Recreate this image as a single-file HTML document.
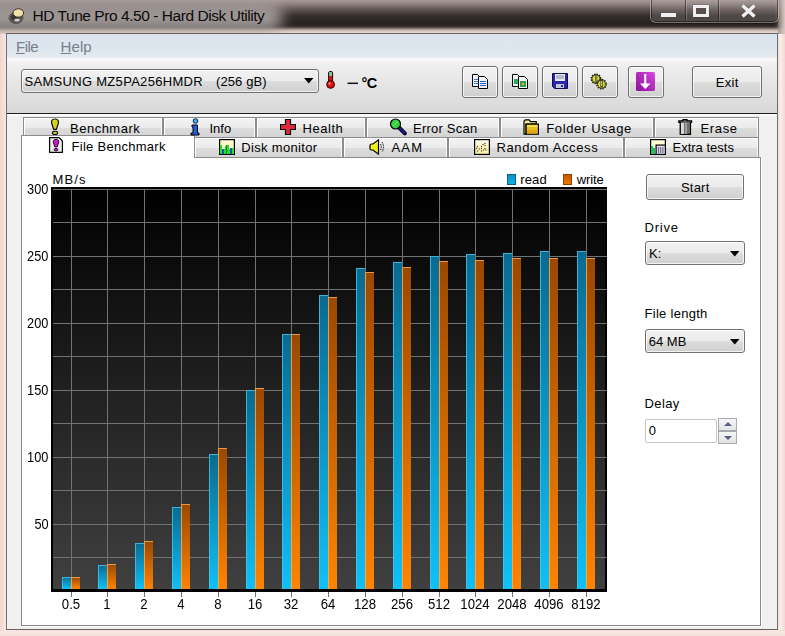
<!DOCTYPE html>
<html><head><meta charset="utf-8"><title>HD Tune Pro</title><style>
*{margin:0;padding:0;box-sizing:border-box}
html,body{width:785px;height:636px;overflow:hidden;background:linear-gradient(90deg,#f2d8d2,#f8e4e0 6px,#f6e0da 50%,#f3dcd6);font-family:"Liberation Sans",sans-serif}
.a{position:absolute}
.t{position:absolute;white-space:pre}
.btn{position:absolute;border:1px solid #707070;border-radius:3px;
 background:linear-gradient(#f2f2f2 0%,#ebebeb 50%,#dddddd 51%,#cfcfcf 100%);
 box-shadow:inset 0 0 0 1px rgba(255,255,255,.75)}
.combo{position:absolute;border:1px solid #707070;border-radius:3px;
 background:linear-gradient(#f2f2f2 0%,#ebebeb 50%,#dddddd 51%,#cfcfcf 100%);
 box-shadow:inset 0 0 0 1px rgba(255,255,255,.75)}
.tab{position:absolute;border:1px solid #8c8c8c;border-bottom:none;box-shadow:inset 1px 1px 0 #fff,inset -1px 0 0 #fafafa;
 background:linear-gradient(#f3f3f3 0%,#ebebeb 50%,#dddddd 51%,#d4d4d4 100%)}
</style></head><body>
<div class="a" style="left:0;top:0;width:785px;height:34px;background:linear-gradient(#a89a98 0px,#8e8280 4px,#5e5250 10px,#342c2b 16px,#282221 23px,#2e2624 26px,#6a5c58 28px,#c4b2aa 30px,#e4d2ca 32px,#eedad2 34px)"></div>
<div class="a" style="left:-40px;top:3px;width:323px;height:28px;border-radius:14px;background:linear-gradient(#b8aeac,#9c9696 40%,#908c8c 65%,#c0b2ac);filter:blur(7px);opacity:1"></div>
<svg class="a" style="left:6px;top:6px" width="22" height="20" viewBox="0 0 22 20">
<ellipse cx="10" cy="12" rx="7.5" ry="6" fill="#2a2424" opacity=".55"/>
<ellipse cx="9" cy="11.5" rx="4" ry="3" fill="#1a1414" opacity=".5"/>
<ellipse cx="12.3" cy="7" rx="5.3" ry="4.2" fill="#f0e0a8" stroke="#2a2018" stroke-width=".9"/>
<ellipse cx="11" cy="14" rx="2.8" ry="1.6" fill="#e8e8e8" opacity=".85"/>
</svg>
<div class="t" style="left:32.5px;top:8.48px;font-size:15.5px;line-height:15.5px;color:#0c0a0a;letter-spacing:-0.45px">HD Tune Pro 4.50 - Hard Disk Utility</div>
<div class="a" style="left:778px;top:0;width:7px;height:34px;background:linear-gradient(90deg,rgba(120,105,100,.6),rgba(200,185,180,.9) 60%,#d8c8c4);"></div>
<div class="a" style="left:775px;top:0;width:6px;height:34px;background:linear-gradient(90deg,rgba(0,0,0,0),rgba(200,185,180,.5));filter:blur(1px)"></div>
<div class="a" style="left:650px;top:-3px;width:129px;height:26px;border:1px solid rgba(255,255,255,.32);border-radius:0 0 6px 6px;box-shadow:inset 0 0 0 1px rgba(20,12,12,.55),0 1px 1px rgba(0,0,0,.3);background:linear-gradient(rgba(255,255,255,.04),rgba(255,255,255,.16))"></div>
<div class="a" style="left:685px;top:0;width:1px;height:21px;background:rgba(30,20,20,.55);box-shadow:1px 0 0 rgba(255,255,255,.2)"></div>
<div class="a" style="left:718px;top:0;width:1px;height:21px;background:rgba(30,20,20,.55);box-shadow:1px 0 0 rgba(255,255,255,.2)"></div>
<div class="a" style="left:661px;top:13px;width:15px;height:4px;background:#f0f0f0;box-shadow:0 0 1px #333"></div>
<div class="a" style="left:693px;top:5px;width:16px;height:12px;border:3px solid #f0f0f0;border-top-width:3px;background:#5a5050;box-shadow:0 0 1px #333"></div>
<svg class="a" style="left:740px;top:4px" width="17" height="14" viewBox="0 0 17 14">
<path d="M2.5 1.5 L14.5 12.5 M14.5 1.5 L2.5 12.5" stroke="#3a3030" stroke-width="4.4" opacity=".35"/><path d="M2.5 1.5 L14.5 12.5 M14.5 1.5 L2.5 12.5" stroke="#f0f0f0" stroke-width="3.4"/></svg>
<div class="a" style="left:0;top:34px;width:6px;height:602px;background:linear-gradient(90deg,#f2d6d0,#fae6e2)"></div>
<div class="a" style="left:778px;top:34px;width:7px;height:602px;background:linear-gradient(90deg,#f0dcd8,#fbefec 35%,#f6e2dd 70%,#f2dad4)"></div>
<div class="a" style="left:0;top:630px;width:785px;height:6px;background:linear-gradient(#f4e0dc,#f8e8e4 40%,#f3dcd6)"></div>
<div class="a" style="left:6px;top:33px;width:772px;height:597px;border:1px solid #6a6262;border-left-color:#707070;border-right-color:#707070;background:#f0f0f0"></div>
<div class="a" style="left:7px;top:34px;width:770px;height:24px;background:linear-gradient(#dbe3ec,#dee6ee 70%,#e6ebf0)"></div>
<div class="t" style="left:16px;top:39.30px;font-size:15px;line-height:15px;color:#76808c;letter-spacing:-0.5px"><u>F</u>ile</div>
<div class="t" style="left:60.5px;top:39.30px;font-size:15px;line-height:15px;color:#76808c;letter-spacing:0.1px"><u>H</u>elp</div>
<div class="a" style="left:7px;top:58px;width:770px;height:55px;background:linear-gradient(#f8f8f8,#eeeeee 15%,#e6e6e6 45%,#d8d8d8)"></div>
<div class="a" style="left:7px;top:113px;width:770px;height:1px;background:#1e1e1e"></div>
<div class="a" style="left:7px;top:114px;width:770px;height:2px;background:#fafafa"></div>
<div class="combo" style="left:21px;top:69px;width:298px;height:24px"></div>
<div class="t" style="left:24.5px;top:74.99px;font-size:13px;line-height:13px;color:#000;letter-spacing:0.3px">SAMSUNG MZ5PA256HMDR</div>
<div class="t" style="left:216px;top:74.99px;font-size:13px;line-height:13px;color:#000;letter-spacing:0.1px">(256 gB)</div>
<svg class="a" style="left:304px;top:78px" width="10" height="6"><path d="M0 0H9.5L4.75 5.5Z" fill="#000"/></svg>
<svg class="a" style="left:325px;top:70px" width="11" height="19" viewBox="0 0 11 19">
<rect x="3.6" y="1.5" width="4" height="12" rx="1.5" fill="#c81818" stroke="#300" stroke-width="1"/>
<rect x="4.2" y="2" width="2.8" height="4" fill="#70d0a8"/>
<circle cx="5.6" cy="14.4" r="3.9" fill="#e01010" stroke="#300" stroke-width="1"/>
<circle cx="4.6" cy="13.6" r="1.1" fill="#ffb0b0"/>
</svg>
<svg class="a" style="left:346px;top:80px" width="13" height="6"><path d="M1.5 3.3H12" stroke="#111" stroke-width="1.5"/></svg>
<div class="t" style="left:361.5px;top:75.52px;font-size:14.5px;line-height:14.5px;color:#000;font-weight:bold;letter-spacing:-0.6px">°C</div>
<div class="btn" style="left:462px;top:66px;width:36px;height:32px"></div>
<div class="btn" style="left:502px;top:66px;width:36px;height:32px"></div>
<div class="btn" style="left:542px;top:66px;width:36px;height:32px"></div>
<div class="btn" style="left:582px;top:66px;width:36px;height:32px"></div>
<div class="btn" style="left:628px;top:66px;width:36px;height:32px"></div>
<div class="btn" style="left:692px;top:66px;width:70px;height:32px"></div>
<div class="t" style="left:715.8px;top:75.99px;font-size:13px;line-height:13px;color:#000;letter-spacing:0.3px">Exit</div>
<svg class="a" style="left:472px;top:74px" width="18" height="16" viewBox="0 0 18 16">
<path d="M0.5 0.5H5.5L7.5 2.5V12.5H0.5Z" fill="#eef4fb" stroke="#000"/>
<path d="M2 5.5H6M2 7.5H6M2 9.5H6" stroke="#2a7fd0" stroke-width="1"/>
<path d="M6.5 2.5H12.5L15.5 5.5V14.5H6.5Z" fill="#eef4fb" stroke="#000"/>
<path d="M8 7.5H14M8 9.5H14M8 11.5H14" stroke="#2a5fd0" stroke-width="1"/>
</svg>
<svg class="a" style="left:512px;top:74px" width="18" height="16" viewBox="0 0 18 16">
<path d="M0.5 0.5H5.5L7.5 2.5V12.5H0.5Z" fill="#f4f4f4" stroke="#000"/>
<rect x="2" y="5" width="4" height="5" fill="#20b060"/>
<path d="M6.5 2.5H12.5L15.5 5.5V14.5H6.5Z" fill="#f4f4f4" stroke="#000"/>
<rect x="8" y="7" width="6" height="6" fill="#30a050"/><rect x="10" y="9" width="2" height="2" fill="#d0c020"/>
</svg>
<svg class="a" style="left:552px;top:73px" width="16" height="16" viewBox="0 0 16 16">
<path d="M0.5 0.5H15.5V15.5H2.5L0.5 13.5Z" fill="#2828a8" stroke="#101050"/>
<rect x="3" y="1" width="10" height="7" fill="#e8e8f0"/>
<path d="M4 3H12M4 5H12" stroke="#8888a0" stroke-width="1"/>
<rect x="4" y="11" width="8" height="4" fill="#c8c8d0"/>
<rect x="9" y="12" width="2" height="2" fill="#2828a8"/>
</svg>
<svg class="a" style="left:590px;top:73px" width="18" height="17" viewBox="0 0 18 17">
<circle cx="6" cy="5.8" r="4.6" fill="none" stroke="#1a1a00" stroke-width="1.6" stroke-dasharray="1.4 1.0"/>
<circle cx="6" cy="5.8" r="4" fill="#d6e028" stroke="#1a1a00" stroke-width=".7"/>
<circle cx="11.5" cy="11.2" r="4.6" fill="none" stroke="#1a1a00" stroke-width="1.6" stroke-dasharray="1.4 1.0"/>
<circle cx="11.5" cy="11.2" r="4" fill="#d6e028" stroke="#1a1a00" stroke-width=".7"/>
<rect x="5.3" y="1.5" width="1.6" height="7" fill="#c8c0c8" stroke="#302838" stroke-width=".6"/>
<rect x="10.8" y="7" width="1.6" height="7" fill="#c8c0c8" stroke="#302838" stroke-width=".6"/>
</svg>
<svg class="a" style="left:636px;top:72px" width="19" height="19" viewBox="0 0 19 19">
<defs><linearGradient id="pg" x1="0" y1="1" x2="1" y2="0"><stop offset="0" stop-color="#8a1098"/><stop offset="1" stop-color="#d848e0"/></linearGradient></defs>
<rect x="0" y="0" width="19" height="19" rx="1.5" fill="url(#pg)"/>
<path d="M8.2 2H10.3V11.5H14.5L9.25 17L4 11.5H8.2Z" fill="#fff"/>
</svg>
<div class="a" style="left:21px;top:157px;width:741px;height:470px;border-right:1px solid #fff;border-bottom:1px solid #fff"></div>
<div class="a" style="left:21px;top:157px;width:740px;height:469px;border:1px solid #8a8a8a;background:#fff"></div>
<div class="tab" style="left:23px;top:117px;width:140px;height:20px"></div>
<div class="t" style="left:70px;top:121.79px;font-size:13px;line-height:13px;color:#000;letter-spacing:0.5px">Benchmark</div>
<div class="tab" style="left:163px;top:117px;width:93px;height:20px"></div>
<div class="t" style="left:209.5px;top:121.79px;font-size:13px;line-height:13px;color:#000;letter-spacing:0px">Info</div>
<div class="tab" style="left:256px;top:117px;width:110px;height:20px"></div>
<div class="t" style="left:302.5px;top:121.79px;font-size:13px;line-height:13px;color:#000;letter-spacing:0.55px">Health</div>
<div class="tab" style="left:366px;top:117px;width:134px;height:20px"></div>
<div class="t" style="left:413px;top:121.79px;font-size:13px;line-height:13px;color:#000;letter-spacing:0.22px">Error Scan</div>
<div class="tab" style="left:500px;top:117px;width:154px;height:20px"></div>
<div class="t" style="left:546.3px;top:121.79px;font-size:13px;line-height:13px;color:#000;letter-spacing:0.63px">Folder Usage</div>
<div class="tab" style="left:654px;top:117px;width:105px;height:20px"></div>
<div class="t" style="left:700.5px;top:121.79px;font-size:13px;line-height:13px;color:#000;letter-spacing:0.65px">Erase</div>
<div class="a" style="left:21px;top:135px;width:174px;height:23px;border:1px solid #8c8c8c;border-bottom:none;background:#fff"></div>
<div class="tab" style="left:194px;top:137px;width:149px;height:20px"></div>
<div class="t" style="left:241.3px;top:141.49px;font-size:13px;line-height:13px;color:#000;letter-spacing:0.32px">Disk monitor</div>
<div class="tab" style="left:343px;top:137px;width:105px;height:20px"></div>
<div class="t" style="left:391.5px;top:141.49px;font-size:13px;line-height:13px;color:#000;letter-spacing:1.2px">AAM</div>
<div class="tab" style="left:448px;top:137px;width:176px;height:20px"></div>
<div class="t" style="left:496.5px;top:141.49px;font-size:13px;line-height:13px;color:#000;letter-spacing:0.6px">Random Access</div>
<div class="tab" style="left:624px;top:137px;width:135px;height:20px"></div>
<div class="t" style="left:672.5px;top:141.49px;font-size:13px;line-height:13px;color:#000;letter-spacing:0.0px">Extra tests</div>
<div class="t" style="left:71.5px;top:139.79px;font-size:13px;line-height:13px;color:#000;letter-spacing:0.28px">File Benchmark</div>
<svg class="a" style="left:50px;top:118px" width="10" height="18" viewBox="0 0 10 18">
<path d="M5 1C8.3 1 8.9 3.6 8.2 5.8L6.3 11.4H3.7L1.8 5.8C1.1 3.6 1.7 1 5 1Z" fill="#d4d41c" stroke="#000" stroke-width="1.1"/>
<path d="M3.5 3Q4 2 5 2" stroke="#f0f080" stroke-width="1" fill="none"/>
<ellipse cx="5" cy="14.9" rx="2.6" ry="1.6" fill="#d4d41c" stroke="#000" stroke-width="1.1"/>
</svg>
<svg class="a" style="left:189px;top:118px" width="12" height="18" viewBox="0 0 12 18">
<circle cx="6.5" cy="3" r="2.3" fill="#40b0e8" stroke="#102050" stroke-width="1"/>
<path d="M3 7H8.5V15H10V17H2V15H4V9H3Z" fill="#2060e0" stroke="#000" stroke-width="1"/>
</svg>
<svg class="a" style="left:280px;top:119px" width="16" height="16" viewBox="0 0 16 16">
<path d="M5.5 0.5H10.5V5.5H15.5V10.5H10.5V15.5H5.5V10.5H0.5V5.5H5.5Z" fill="#e02838" stroke="#000" stroke-width="1.2"/>
</svg>
<svg class="a" style="left:389px;top:118px" width="18" height="18" viewBox="0 0 18 18">
<path d="M10 9.5L15.8 15.3" stroke="#000" stroke-width="4" stroke-linecap="round"/>
<path d="M10.5 10L15.6 15.1" stroke="#1a1a98" stroke-width="2.2" stroke-linecap="round"/>
<circle cx="6.5" cy="6" r="5" fill="#38d040" stroke="#000" stroke-width="1.2"/>
<path d="M4 8L8.5 3.5" stroke="#90f090" stroke-width="1" opacity=".7"/>
</svg>
<svg class="a" style="left:523px;top:119px" width="17" height="16" viewBox="0 0 17 16">
<path d="M1 15.2V2.3L2.4 0.8H6.1L7.6 2.6H13.2V5.2H3V15.2Z" fill="#f4ec9c" stroke="#000" stroke-width="1.2"/>
<rect x="3.1" y="5.1" width="12.3" height="10.1" fill="#e6c020" stroke="#000" stroke-width="1.2"/>
<rect x="4" y="6" width="10.5" height="2" fill="#f2dc50"/>
<rect x="4" y="11" width="10.5" height="3.5" fill="#e0a818"/>
</svg>
<svg class="a" style="left:678px;top:119px" width="15" height="16" viewBox="0 0 15 16">
<path d="M0.8 1.8H5V0.7H9V1.8H13.6V3.5H12.5V15.3H2.2V3.5H0.8Z" fill="#707070" stroke="#000" stroke-width="1.2"/>
<rect x="3" y="4" width="3" height="11" fill="#d8d8d8"/><rect x="7" y="4" width="2" height="11" fill="#a0a0a0"/>
</svg>
<svg class="a" style="left:49px;top:137px" width="14" height="16" viewBox="0 0 14 16">
<path d="M0.6 0.6H10L13.4 4V15.4H0.6Z" fill="#e8f0e8" stroke="#000" stroke-width="1.2"/>
<path d="M7 2.3C9.6 2.3 10 4.4 9.5 6L8.1 10H5.9L4.5 6C4 4.4 4.4 2.3 7 2.3Z" fill="#c020c0" stroke="#300030" stroke-width="1"/>
<ellipse cx="7" cy="12.6" rx="1.9" ry="1.2" fill="#c020c0" stroke="#300030" stroke-width="1"/>
</svg>
<svg class="a" style="left:219px;top:139px" width="16" height="16" viewBox="0 0 16 16">
<rect x="0.6" y="0.6" width="14.8" height="14.8" fill="#fff8c8" stroke="#000" stroke-width="1.2"/>
<path d="M1 6H3V10H6V7H8V6H10V10H12V9H15V15H1Z" fill="#20e020"/>
<rect x="3" y="10" width="2" height="5" fill="#2050c0"/><rect x="7" y="6" width="1" height="9" fill="#108040"/><rect x="11" y="9" width="2" height="6" fill="#2050c0"/>
</svg>
<svg class="a" style="left:369px;top:139px" width="17" height="16" viewBox="0 0 17 16">
<path d="M1 6.5Q1 5 2.5 5H4L9.5 0.8V15.2L4 11H2.5Q1 11 1 9.5Z" fill="#f0f020" stroke="#000" stroke-width="1.2"/>
<path d="M11.5 5Q13 8 11.5 11M13 3Q16 8 13 13" fill="none" stroke="#000" stroke-width="1" stroke-dasharray="1.5 1"/>
</svg>
<svg class="a" style="left:474px;top:139px" width="16" height="16" viewBox="0 0 16 16">
<defs><linearGradient id="rag" x1="0" y1="0" x2="0" y2="1"><stop offset="0" stop-color="#fffef0"/><stop offset="1" stop-color="#f8f0a0"/></linearGradient></defs>
<rect x="0.6" y="0.6" width="14.8" height="14.8" fill="url(#rag)" stroke="#000" stroke-width="1.2"/>
<g fill="#604010"><circle cx="11" cy="4.5" r=".7"/><circle cx="9" cy="5.5" r=".7"/><circle cx="11" cy="6.5" r=".7"/><circle cx="3.5" cy="7.5" r=".7"/><circle cx="7.5" cy="7.5" r=".7"/><circle cx="2.7" cy="9.3" r=".7"/><circle cx="5.3" cy="10" r=".7"/><circle cx="7.5" cy="9.5" r=".7"/><circle cx="11" cy="9.5" r=".7"/><circle cx="3.5" cy="12" r=".7"/><circle cx="7.5" cy="12" r=".7"/><circle cx="9.5" cy="11" r=".7"/><circle cx="12" cy="11" r=".7"/></g>
</svg>
<svg class="a" style="left:650px;top:139px" width="16" height="16" viewBox="0 0 16 16">
<rect x="0.6" y="0.6" width="14.8" height="14.8" fill="#fffcd0" stroke="#000" stroke-width="1.2"/>
<path d="M1 7H3V9H5V15H1Z" fill="#20c060"/>
<rect x="6.1" y="6.1" width="9.3" height="9.3" fill="#f0e0f8" stroke="#000" stroke-width="1.2"/>
<g fill="#403060"><circle cx="8.5" cy="9" r=".8"/><circle cx="10.7" cy="9" r=".8"/><circle cx="12.9" cy="9" r=".8"/><circle cx="8.5" cy="11" r=".8"/><circle cx="10.7" cy="11" r=".8"/><circle cx="12.9" cy="11" r=".8"/><circle cx="8.5" cy="13" r=".8"/><circle cx="10.7" cy="13" r=".8"/><circle cx="12.9" cy="13" r=".8"/></g>
</svg>
<svg class="a" style="left:0;top:0" width="785" height="636" viewBox="0 0 785 636">
<defs>
<linearGradient id="cbg" x1="0" y1="0" x2="0" y2="1"><stop offset="0" stop-color="#000"/><stop offset="1" stop-color="#404040"/></linearGradient>
<linearGradient id="bb" x1="0" y1="0" x2="0" y2="1"><stop offset="0" stop-color="#0a6a90"/><stop offset="1" stop-color="#10c0f8"/></linearGradient>
<linearGradient id="ob" x1="0" y1="0" x2="0" y2="1"><stop offset="0" stop-color="#9a4800"/><stop offset="1" stop-color="#ff8400"/></linearGradient>
</defs>
<rect x="51" y="187" width="556" height="405" fill="#000"/>
<rect x="53" y="189" width="552" height="400" fill="url(#cbg)"/>
<path d="M53 189.5H607" stroke="#727272" stroke-width="1"/>
<path d="M53 222.5H607" stroke="#727272" stroke-width="1"/>
<path d="M53 256.5H607" stroke="#727272" stroke-width="1"/>
<path d="M53 289.5H607" stroke="#727272" stroke-width="1"/>
<path d="M53 323.5H607" stroke="#727272" stroke-width="1"/>
<path d="M53 356.5H607" stroke="#727272" stroke-width="1"/>
<path d="M53 390.5H607" stroke="#727272" stroke-width="1"/>
<path d="M53 423.5H607" stroke="#727272" stroke-width="1"/>
<path d="M53 457.5H607" stroke="#727272" stroke-width="1"/>
<path d="M53 490.5H607" stroke="#727272" stroke-width="1"/>
<path d="M53 524.5H607" stroke="#727272" stroke-width="1"/>
<path d="M53 557.5H607" stroke="#727272" stroke-width="1"/>
<path d="M71.5 189V597" stroke="#727272" stroke-width="1"/>
<path d="M107.5 189V597" stroke="#727272" stroke-width="1"/>
<path d="M144.5 189V597" stroke="#727272" stroke-width="1"/>
<path d="M181.5 189V597" stroke="#727272" stroke-width="1"/>
<path d="M218.5 189V597" stroke="#727272" stroke-width="1"/>
<path d="M255.5 189V597" stroke="#727272" stroke-width="1"/>
<path d="M291.5 189V597" stroke="#727272" stroke-width="1"/>
<path d="M328.5 189V597" stroke="#727272" stroke-width="1"/>
<path d="M365.5 189V597" stroke="#727272" stroke-width="1"/>
<path d="M402.5 189V597" stroke="#727272" stroke-width="1"/>
<path d="M439.5 189V597" stroke="#727272" stroke-width="1"/>
<path d="M475.5 189V597" stroke="#727272" stroke-width="1"/>
<path d="M512.5 189V597" stroke="#727272" stroke-width="1"/>
<path d="M549.5 189V597" stroke="#727272" stroke-width="1"/>
<path d="M586.5 189V597" stroke="#727272" stroke-width="1"/>
<rect x="62" y="577" width="9" height="12" fill="url(#bb)"/>
<path d="M62 577.5H71M62.5 577V589" stroke="#40c8f0" stroke-width="1" opacity=".8"/>
<rect x="71" y="577" width="9" height="12" fill="url(#ob)"/>
<path d="M71 577.5H80M71.5 577V589" stroke="#ffb050" stroke-width="1" opacity=".8"/>
<rect x="98" y="565" width="9" height="24" fill="url(#bb)"/>
<path d="M98 565.5H107M98.5 565V589" stroke="#40c8f0" stroke-width="1" opacity=".8"/>
<rect x="107" y="564" width="9" height="25" fill="url(#ob)"/>
<path d="M107 564.5H116M107.5 564V589" stroke="#ffb050" stroke-width="1" opacity=".8"/>
<rect x="135" y="543" width="9" height="46" fill="url(#bb)"/>
<path d="M135 543.5H144M135.5 543V589" stroke="#40c8f0" stroke-width="1" opacity=".8"/>
<rect x="144" y="541" width="9" height="48" fill="url(#ob)"/>
<path d="M144 541.5H153M144.5 541V589" stroke="#ffb050" stroke-width="1" opacity=".8"/>
<rect x="172" y="507" width="9" height="82" fill="url(#bb)"/>
<path d="M172 507.5H181M172.5 507V589" stroke="#40c8f0" stroke-width="1" opacity=".8"/>
<rect x="181" y="504" width="9" height="85" fill="url(#ob)"/>
<path d="M181 504.5H190M181.5 504V589" stroke="#ffb050" stroke-width="1" opacity=".8"/>
<rect x="209" y="454" width="9" height="135" fill="url(#bb)"/>
<path d="M209 454.5H218M209.5 454V589" stroke="#40c8f0" stroke-width="1" opacity=".8"/>
<rect x="218" y="448" width="9" height="141" fill="url(#ob)"/>
<path d="M218 448.5H227M218.5 448V589" stroke="#ffb050" stroke-width="1" opacity=".8"/>
<rect x="246" y="390" width="9" height="199" fill="url(#bb)"/>
<path d="M246 390.5H255M246.5 390V589" stroke="#40c8f0" stroke-width="1" opacity=".8"/>
<rect x="255" y="388" width="9" height="201" fill="url(#ob)"/>
<path d="M255 388.5H264M255.5 388V589" stroke="#ffb050" stroke-width="1" opacity=".8"/>
<rect x="282" y="334" width="9" height="255" fill="url(#bb)"/>
<path d="M282 334.5H291M282.5 334V589" stroke="#40c8f0" stroke-width="1" opacity=".8"/>
<rect x="291" y="334" width="9" height="255" fill="url(#ob)"/>
<path d="M291 334.5H300M291.5 334V589" stroke="#ffb050" stroke-width="1" opacity=".8"/>
<rect x="319" y="295" width="9" height="294" fill="url(#bb)"/>
<path d="M319 295.5H328M319.5 295V589" stroke="#40c8f0" stroke-width="1" opacity=".8"/>
<rect x="328" y="297" width="9" height="292" fill="url(#ob)"/>
<path d="M328 297.5H337M328.5 297V589" stroke="#ffb050" stroke-width="1" opacity=".8"/>
<rect x="356" y="268" width="9" height="321" fill="url(#bb)"/>
<path d="M356 268.5H365M356.5 268V589" stroke="#40c8f0" stroke-width="1" opacity=".8"/>
<rect x="365" y="272" width="9" height="317" fill="url(#ob)"/>
<path d="M365 272.5H374M365.5 272V589" stroke="#ffb050" stroke-width="1" opacity=".8"/>
<rect x="393" y="262" width="9" height="327" fill="url(#bb)"/>
<path d="M393 262.5H402M393.5 262V589" stroke="#40c8f0" stroke-width="1" opacity=".8"/>
<rect x="402" y="267" width="9" height="322" fill="url(#ob)"/>
<path d="M402 267.5H411M402.5 267V589" stroke="#ffb050" stroke-width="1" opacity=".8"/>
<rect x="430" y="256" width="9" height="333" fill="url(#bb)"/>
<path d="M430 256.5H439M430.5 256V589" stroke="#40c8f0" stroke-width="1" opacity=".8"/>
<rect x="439" y="261" width="9" height="328" fill="url(#ob)"/>
<path d="M439 261.5H448M439.5 261V589" stroke="#ffb050" stroke-width="1" opacity=".8"/>
<rect x="466" y="254" width="9" height="335" fill="url(#bb)"/>
<path d="M466 254.5H475M466.5 254V589" stroke="#40c8f0" stroke-width="1" opacity=".8"/>
<rect x="475" y="260" width="9" height="329" fill="url(#ob)"/>
<path d="M475 260.5H484M475.5 260V589" stroke="#ffb050" stroke-width="1" opacity=".8"/>
<rect x="503" y="253" width="9" height="336" fill="url(#bb)"/>
<path d="M503 253.5H512M503.5 253V589" stroke="#40c8f0" stroke-width="1" opacity=".8"/>
<rect x="512" y="258" width="9" height="331" fill="url(#ob)"/>
<path d="M512 258.5H521M512.5 258V589" stroke="#ffb050" stroke-width="1" opacity=".8"/>
<rect x="540" y="251" width="9" height="338" fill="url(#bb)"/>
<path d="M540 251.5H549M540.5 251V589" stroke="#40c8f0" stroke-width="1" opacity=".8"/>
<rect x="549" y="258" width="9" height="331" fill="url(#ob)"/>
<path d="M549 258.5H558M549.5 258V589" stroke="#ffb050" stroke-width="1" opacity=".8"/>
<rect x="577" y="251" width="9" height="338" fill="url(#bb)"/>
<path d="M577 251.5H586M577.5 251V589" stroke="#40c8f0" stroke-width="1" opacity=".8"/>
<rect x="586" y="258" width="9" height="331" fill="url(#ob)"/>
<path d="M586 258.5H595M586.5 258V589" stroke="#ffb050" stroke-width="1" opacity=".8"/>
<rect x="51" y="589" width="556" height="3" fill="#000"/>
<path d="M71.5 592V597" stroke="#727272" stroke-width="1"/>
<path d="M107.5 592V597" stroke="#727272" stroke-width="1"/>
<path d="M144.5 592V597" stroke="#727272" stroke-width="1"/>
<path d="M181.5 592V597" stroke="#727272" stroke-width="1"/>
<path d="M218.5 592V597" stroke="#727272" stroke-width="1"/>
<path d="M255.5 592V597" stroke="#727272" stroke-width="1"/>
<path d="M291.5 592V597" stroke="#727272" stroke-width="1"/>
<path d="M328.5 592V597" stroke="#727272" stroke-width="1"/>
<path d="M365.5 592V597" stroke="#727272" stroke-width="1"/>
<path d="M402.5 592V597" stroke="#727272" stroke-width="1"/>
<path d="M439.5 592V597" stroke="#727272" stroke-width="1"/>
<path d="M475.5 592V597" stroke="#727272" stroke-width="1"/>
<path d="M512.5 592V597" stroke="#727272" stroke-width="1"/>
<path d="M549.5 592V597" stroke="#727272" stroke-width="1"/>
<path d="M586.5 592V597" stroke="#727272" stroke-width="1"/>
<defs><linearGradient id="lb" x1="0" y1="0" x2="0" y2="1"><stop offset="0" stop-color="#1090c0"/><stop offset="1" stop-color="#10b0e8"/></linearGradient><linearGradient id="lo" x1="0" y1="0" x2="0" y2="1"><stop offset="0" stop-color="#c05800"/><stop offset="1" stop-color="#f07800"/></linearGradient></defs>
<rect x="507.5" y="174.5" width="8" height="10" fill="url(#lb)" stroke="#0a6088" stroke-width="1"/>
<rect x="563.5" y="174.5" width="8" height="10" fill="url(#lo)" stroke="#904000" stroke-width="1"/>
</svg>
<div class="t" style="left:52.5px;top:172.99px;font-size:13px;line-height:13px;color:#000;letter-spacing:1.1px">MB/s</div>
<div class="t" style="left:520.3px;top:172.69px;font-size:13px;line-height:13px;color:#000;letter-spacing:0.1px">read</div>
<div class="t" style="left:576.8px;top:172.69px;font-size:13px;line-height:13px;color:#000;letter-spacing:-0.1px">write</div>
<div class="t" style="right:736.7px;top:182.05px;font-size:14px;line-height:14px;color:#000;text-align:right;transform:scaleX(0.91);transform-origin:100% 50%">300</div>
<div class="t" style="right:736.7px;top:249.05px;font-size:14px;line-height:14px;color:#000;text-align:right;transform:scaleX(0.91);transform-origin:100% 50%">250</div>
<div class="t" style="right:736.7px;top:316.05px;font-size:14px;line-height:14px;color:#000;text-align:right;transform:scaleX(0.91);transform-origin:100% 50%">200</div>
<div class="t" style="right:736.7px;top:383.05px;font-size:14px;line-height:14px;color:#000;text-align:right;transform:scaleX(0.91);transform-origin:100% 50%">150</div>
<div class="t" style="right:736.7px;top:450.05px;font-size:14px;line-height:14px;color:#000;text-align:right;transform:scaleX(0.91);transform-origin:100% 50%">100</div>
<div class="t" style="right:736.7px;top:517.05px;font-size:14px;line-height:14px;color:#000;text-align:right;transform:scaleX(0.91);transform-origin:100% 50%">50</div>
<div class="t" style="left:31.400000000000006px;width:80px;top:596.95px;font-size:14px;line-height:14px;color:#000;text-align:center;transform:scaleX(0.94);transform-origin:50% 50%">0.5</div>
<div class="t" style="left:67.4px;width:80px;top:596.95px;font-size:14px;line-height:14px;color:#000;text-align:center;transform:scaleX(0.94);transform-origin:50% 50%">1</div>
<div class="t" style="left:104.4px;width:80px;top:596.95px;font-size:14px;line-height:14px;color:#000;text-align:center;transform:scaleX(0.94);transform-origin:50% 50%">2</div>
<div class="t" style="left:141.4px;width:80px;top:596.95px;font-size:14px;line-height:14px;color:#000;text-align:center;transform:scaleX(0.94);transform-origin:50% 50%">4</div>
<div class="t" style="left:178.4px;width:80px;top:596.95px;font-size:14px;line-height:14px;color:#000;text-align:center;transform:scaleX(0.94);transform-origin:50% 50%">8</div>
<div class="t" style="left:215.4px;width:80px;top:596.95px;font-size:14px;line-height:14px;color:#000;text-align:center;transform:scaleX(0.94);transform-origin:50% 50%">16</div>
<div class="t" style="left:251.39999999999998px;width:80px;top:596.95px;font-size:14px;line-height:14px;color:#000;text-align:center;transform:scaleX(0.94);transform-origin:50% 50%">32</div>
<div class="t" style="left:288.4px;width:80px;top:596.95px;font-size:14px;line-height:14px;color:#000;text-align:center;transform:scaleX(0.94);transform-origin:50% 50%">64</div>
<div class="t" style="left:325.4px;width:80px;top:596.95px;font-size:14px;line-height:14px;color:#000;text-align:center;transform:scaleX(0.94);transform-origin:50% 50%">128</div>
<div class="t" style="left:362.4px;width:80px;top:596.95px;font-size:14px;line-height:14px;color:#000;text-align:center;transform:scaleX(0.94);transform-origin:50% 50%">256</div>
<div class="t" style="left:399.4px;width:80px;top:596.95px;font-size:14px;line-height:14px;color:#000;text-align:center;transform:scaleX(0.94);transform-origin:50% 50%">512</div>
<div class="t" style="left:435.4px;width:80px;top:596.95px;font-size:14px;line-height:14px;color:#000;text-align:center;transform:scaleX(0.94);transform-origin:50% 50%">1024</div>
<div class="t" style="left:472.4px;width:80px;top:596.95px;font-size:14px;line-height:14px;color:#000;text-align:center;transform:scaleX(0.94);transform-origin:50% 50%">2048</div>
<div class="t" style="left:509.4px;width:80px;top:596.95px;font-size:14px;line-height:14px;color:#000;text-align:center;transform:scaleX(0.94);transform-origin:50% 50%">4096</div>
<div class="t" style="left:546.4px;width:80px;top:596.95px;font-size:14px;line-height:14px;color:#000;text-align:center;transform:scaleX(0.94);transform-origin:50% 50%">8192</div>
<div class="btn" style="left:646px;top:174px;width:98px;height:26px"></div>
<div class="t" style="left:681px;top:180.79px;font-size:13px;line-height:13px;color:#000;letter-spacing:0.2px">Start</div>
<div class="t" style="left:644.5px;top:220.59px;font-size:13px;line-height:13px;color:#000;letter-spacing:0.8px">Drive</div>
<div class="combo" style="left:645px;top:241px;width:100px;height:24px"></div>
<div class="t" style="left:649px;top:247.19px;font-size:13px;line-height:13px;color:#000;">K:</div>
<svg class="a" style="left:730px;top:251px" width="10" height="6"><path d="M0 0H9.5L4.75 5.5Z" fill="#000"/></svg>
<div class="t" style="left:644.5px;top:306.69px;font-size:13px;line-height:13px;color:#000;letter-spacing:0.28px">File length</div>
<div class="combo" style="left:645px;top:329px;width:100px;height:24px"></div>
<div class="t" style="left:648.8px;top:334.99px;font-size:13px;line-height:13px;color:#000;">64 MB</div>
<svg class="a" style="left:730px;top:339px" width="10" height="6"><path d="M0 0H9.5L4.75 5.5Z" fill="#000"/></svg>
<div class="t" style="left:644.5px;top:396.69px;font-size:13px;line-height:13px;color:#000;letter-spacing:0.4px">Delay</div>
<div class="a" style="left:645px;top:419px;width:72px;height:24px;border:1px solid #c4c6cc;border-radius:2px;background:#fff"></div>
<div class="t" style="left:648.8px;top:424.09px;font-size:13px;line-height:13px;color:#000;">0</div>
<div class="a" style="left:718px;top:418px;width:19px;height:13px;border:1px solid #a8aab0;background:linear-gradient(#f6f6f6,#e4e4e6)"></div>
<div class="a" style="left:718px;top:431px;width:19px;height:13px;border:1px solid #a8aab0;background:linear-gradient(#f6f6f6,#e2e4e0)"></div>
<svg class="a" style="left:724px;top:422px" width="8" height="4"><path d="M0 4H8L4 0Z" fill="#566088"/></svg>
<svg class="a" style="left:724px;top:436px" width="8" height="4"><path d="M0 0H8L4 4Z" fill="#566088"/></svg>
</body></html>
